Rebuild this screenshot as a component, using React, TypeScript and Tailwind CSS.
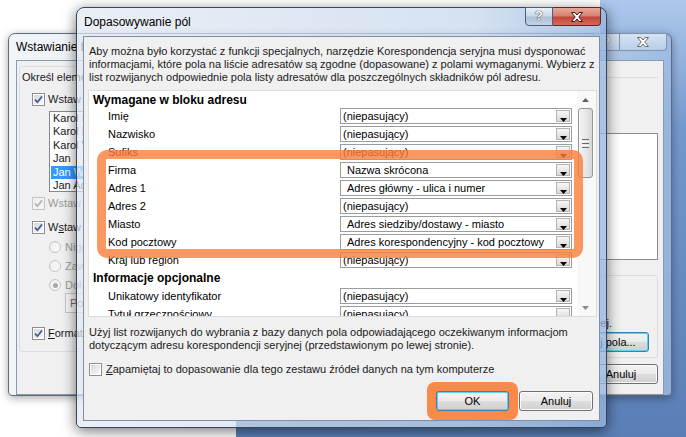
import type { ReactNode } from 'react';

const NONE = '(niepasujący)';

const requiredFields: [string, string][] = [
  ['Imię', NONE],
  ['Nazwisko', NONE],
  ['Sufiks', NONE],
  ['Firma', 'Nazwa skrócona'],
  ['Adres 1', 'Adres główny - ulica i numer'],
  ['Adres 2', NONE],
  ['Miasto', 'Adres siedziby/dostawy - miasto'],
  ['Kod pocztowy', 'Adres korespondencyjny - kod pocztowy'],
  ['Kraj lub region', NONE],
];

const optionalFields: [string, string][] = [
  ['Unikatowy identyfikator', NONE],
  ['Tytuł grzecznościowy', NONE],
];

const recipients = ['Karol Nowak', 'Karol Kowalski', 'Karol Wiśniewski', 'Jan', 'Jan Wójcik', 'Jan Adamski'];

function CheckBox({ checked = false, disabled = false }: { checked?: boolean; disabled?: boolean }) {
  return (
    <span
      className={`flex h-[13px] w-[13px] shrink-0 items-center justify-center border ${
        disabled ? 'border-[#c4c4c4] bg-[#f4f4f4]' : 'border-[#8e8f8f] bg-white'
      }`}
    >
      <span
        className={`flex h-[9px] w-[9px] items-center justify-center bg-gradient-to-br ${
          disabled ? 'from-[#ececec] to-[#f8f8f8]' : 'from-[#d4d8de] to-[#f9f9f9]'
        }`}
      >
        {checked && (
          <svg width="9" height="9" viewBox="0 0 9 9">
            <path
              d="M1 4.6 L3.4 7.2 L8 1.4"
              fill="none"
              stroke={disabled ? '#b3b3b3' : '#4a5f8f'}
              strokeWidth="1.7"
            />
          </svg>
        )}
      </span>
    </span>
  );
}

function Radio({ selected = false }: { selected?: boolean }) {
  return (
    <span className="flex h-[12px] w-[12px] shrink-0 items-center justify-center rounded-full border border-[#c4c4c4] bg-gradient-to-br from-[#ececec] to-[#fbfbfb]">
      {selected && <span className="h-[5px] w-[5px] rounded-full bg-[#a8a8a8]" />}
    </span>
  );
}

function PushButton({
  children,
  width,
  focused = false,
}: {
  children: ReactNode;
  width: string;
  focused?: boolean;
}) {
  return (
    <button
      type="button"
      className={`${width} flex h-[20px] shrink-0 items-center justify-center rounded-[3px] border bg-[linear-gradient(#f3f3f3_0%,#ebebeb_48%,#dddddd_52%,#cfcfcf_100%)] text-[11px] leading-none text-black ${
        focused ? 'border-[#3c7fb1] shadow-[inset_0_0_0_1px_#5ad0f6]' : 'border-[#707070] shadow-[inset_0_0_0_1px_#fbfbfb]'
      }`}
    >
      {children}
    </button>
  );
}

function Combo({ value }: { value: string }) {
  return (
    <div className="flex h-[16px] w-[232px] shrink-0 items-stretch border border-[#9c9c9c] bg-white p-px">
      <span className={`flex-1 overflow-hidden whitespace-nowrap leading-[13px] ${value === NONE ? 'pl-px' : 'pl-[5px]'}`}>
        {value}
      </span>
      <span className="flex w-[14px] justify-center border border-[#b4b4b4] bg-gradient-to-b from-[#f7f7f7] to-[#d9d9d9] pt-[7px]">
        <svg width="7" height="4" viewBox="0 0 7 4">
          <polygon points="0,0 7,0 3.5,4" fill="#000" />
        </svg>
      </span>
    </div>
  );
}

function FieldRow({ label, value }: { label: string; value: string }) {
  return (
    <div className="flex h-[18px] shrink-0 items-center pl-[19px]">
      <span className="w-[232px] whitespace-nowrap">{label}</span>
      <Combo value={value} />
    </div>
  );
}

function CaptionX({ stroke }: { stroke: string }) {
  return (
    <svg width="12" height="10" viewBox="0 0 12 10">
      <path
        d="M0.5 0.5 H3.8 L6 3 L8.2 0.5 H11.5 L7.8 5 L11.5 9.5 H8.2 L6 7 L3.8 9.5 H0.5 L4.2 5 Z"
        fill="#fff"
        stroke={stroke}
        strokeWidth="1"
      />
    </svg>
  );
}

function BackWindow() {
  return (
    <div className="absolute left-[8px] top-[33px] flex h-[363px] w-[664px] flex-col rounded-t-[7px] rounded-b-[4px] border border-[#5f6b7c] bg-[linear-gradient(90deg,rgba(236,240,245,0.75),rgba(214,226,240,0.7)_80%,rgba(160,189,228,0.75))] shadow-[0_2px_8px_rgba(0,0,0,0.35)]">
      <div className="relative flex h-[26px] shrink-0 items-center pl-[7px] text-[12px] text-black">
        Wstawianie bloku adresu
        <div className="absolute right-[4px] top-[-1px] flex">
          <span className="flex h-[18px] w-[27px] items-center justify-center rounded-bl-[4px] border border-[#8193ab] bg-gradient-to-b from-[#e2ebf6]/80 to-[#bfd2ea]/80 text-[12px] font-bold text-white [text-shadow:0_0_1px_#555]">
            ?
          </span>
          <span className="flex h-[18px] w-[47px] items-center justify-center rounded-br-[4px] border border-l-0 border-[#8193ab] bg-gradient-to-b from-[#e2ebf6]/80 to-[#bfd2ea]/80">
            <CaptionX stroke="#6b6b6b" />
          </span>
        </div>
      </div>
      <div className="mx-[7px] flex flex-1 border border-[#8a99ad] bg-[#f0f0f0] text-[11px] text-[#1a1a1a]">
        <div className="ml-[2px] mt-[5px] flex h-[286px] w-[300px] flex-col rounded-[3px] border border-[#d5dfe5] pl-[1px]">
          <div className="mt-[4px] whitespace-nowrap pl-px leading-[13px]">Określ elementy bloku adresu</div>
          <div className="mt-[8px] flex h-[14px] items-center gap-[3px] pl-[11px]">
            <CheckBox checked />
            <span className="whitespace-nowrap">Wstaw nazwę adresata w tym formacie:</span>
          </div>
          <div className="ml-[28px] mt-[5px] h-[81px] w-[200px] border border-[#828790] bg-white">
            {recipients.map((name, index) => (
              <div
                key={name}
                className={`ml-px whitespace-nowrap pl-[2px] leading-[13.4px] ${index === 4 ? 'bg-[#3399ff] text-white' : ''}`}
              >
                {name}
              </div>
            ))}
          </div>
          <div className="mt-[4px] flex h-[14px] items-center gap-[3px] pl-[11px] text-[#9a9a9a]">
            <CheckBox checked disabled />
            <span className="whitespace-nowrap">Wstaw nazwę firmy</span>
          </div>
          <div className="mt-[10px] flex h-[14px] items-center gap-[3px] pl-[11px]">
            <CheckBox checked />
            <span className="whitespace-nowrap">
              W<span className="underline">s</span>taw adres pocztowy:
            </span>
          </div>
          {[
            'Nigdy nie dołączaj kraju/regionu w adresie',
            'Zawsze dołączaj kraj/region w adresie',
            'Dołączaj kraj/region tylko wtedy, gdy jest inny niż:',
          ].map((label, index) => (
            <div
              key={label}
              className={`${index === 0 ? 'mt-[6px]' : 'mt-[5px]'} flex h-[14px] items-center gap-[4px] pl-[28px] text-[#9a9a9a]`}
            >
              <Radio selected={index === 2} />
              <span className="whitespace-nowrap">{label}</span>
            </div>
          ))}
          <div className="ml-[44px] mt-px flex h-[20px] w-[180px] items-center border border-[#c4c4c4] bg-[#f4f4f4] pl-[4px] text-[#6d6d6d]">
            Polska
          </div>
          <div className="mt-[13px] flex h-[14px] items-center gap-[3px] pl-[11px]">
            <CheckBox checked />
            <span className="whitespace-nowrap">
              <span className="underline">F</span>ormatuj adres zgodnie z krajem/regionem docelowym
            </span>
          </div>
        </div>

        <div className="flex flex-1 flex-col items-end pr-[5px]">
          <div className="mt-[4px] h-[13px] w-[300px] border-b border-[#d5dfe5]" />
          <div className="mt-[55px] h-[127px] w-[300px] border border-[#8d8d8d] bg-white" />
          <div className="mt-[15px] flex h-[83px] w-[300px] flex-col items-end rounded-[3px] border border-[#d5dfe5] pr-[8px]">
            <span className="mr-[37px] mt-[41px] whitespace-nowrap leading-[13px]">
              elementy adresu z listy adresowej.
            </span>
            <div className="mt-[2px]">
              <PushButton width="w-[100px]" focused>
                Dopasuj pola...
              </PushButton>
            </div>
          </div>
          <div className="mt-[6px] flex gap-[6px]">
            <PushButton width="w-[74px]">OK</PushButton>
            <PushButton width="w-[74px]">Anuluj</PushButton>
          </div>
        </div>
      </div>
    </div>
  );
}

function MainDialog() {
  return (
    <div className="absolute left-[76px] top-[7px] flex h-[421px] w-[531px] flex-col rounded-t-[8px] rounded-b-[5px] border border-[#34465e] bg-[linear-gradient(90deg,rgba(226,233,242,0.72),rgba(196,213,236,0.7)_75%,rgba(150,181,224,0.78))] shadow-[0_3px_14px_rgba(0,0,0,0.55)]">
      <div className="relative flex h-[28px] shrink-0 items-center pl-[7px] text-[12px] text-black">
        Dopasowywanie pól
        <div className="absolute right-[5px] top-[-1px] flex">
          <span className="flex h-[19px] w-[28px] items-center justify-center rounded-bl-[4px] border border-[#4d5f78] bg-[linear-gradient(#e7eef7_0%,#cbd8e8_48%,#aebfd4_52%,#c3d3e6_100%)] pb-px text-[13px] font-bold text-white [text-shadow:0_0_1px_#222,0_0_1px_#222]">
            ?
          </span>
          <span className="flex h-[19px] w-[48px] items-center justify-center rounded-br-[4px] border border-l-0 border-[#5a2a24] bg-[linear-gradient(#e6a898_0%,#d88272_45%,#c4463a_55%,#d66b5a_100%)]">
            <CaptionX stroke="#3a1a16" />
          </span>
        </div>
      </div>

      <div className="mx-[6px] mb-[6px] flex flex-1 flex-col border border-[#7d8ea6] bg-[#f0f0f0] text-[11px] text-[#1a1a1a]">
        <div className="whitespace-nowrap pl-[5px] pt-[8px] leading-[13px]">
          <div>Aby można było korzystać z funkcji specjalnych, narzędzie Korespondencja seryjna musi dysponować</div>
          <div>informacjami, które pola na liście adresatów są zgodne (dopasowane) z polami wymaganymi. Wybierz z</div>
          <div>list rozwijanych odpowiednie pola listy adresatów dla poszczególnych składników pól adresu.</div>
        </div>

        <div className="relative ml-[4px] mt-[6px] flex h-[227px] w-[509px] shrink-0 border border-[#dcdcdc] bg-white text-black">
          <div className="flex flex-1 flex-col overflow-hidden">
            <div className="flex h-[16px] shrink-0 items-center pl-[4px] pt-[2px] text-[12px] font-bold">
              Wymagane w bloku adresu
            </div>
            {requiredFields.map(([label, value]) => (
              <FieldRow key={label} label={label} value={value} />
            ))}
            <div className="flex h-[18px] shrink-0 items-center pl-[4px] text-[12px] font-bold">Informacje opcjonalne</div>
            {optionalFields.map(([label, value]) => (
              <FieldRow key={label} label={label} value={value} />
            ))}
          </div>

          <div className="flex w-[19px] shrink-0 flex-col bg-[#f8f8f8]">
            <div className="flex h-[17px] items-center justify-center pr-[3px]">
              <svg width="7" height="4" viewBox="0 0 7 4">
                <polygon points="3.5,0 7,4 0,4" fill="#606060" />
              </svg>
            </div>
            <div className="ml-px flex h-[70px] w-[15px] flex-col items-center justify-center gap-[1px] rounded-[3px] border border-[#979797] bg-gradient-to-r from-[#f4f4f4] via-[#e8e8e8] to-[#d6d6d6]">
              <span className="h-px w-[7px] bg-[#6a6a6a]" />
              <span className="h-px w-[7px] bg-[#f8f8f8]" />
              <span className="h-px w-[7px] bg-[#6a6a6a]" />
              <span className="h-px w-[7px] bg-[#f8f8f8]" />
              <span className="h-px w-[7px] bg-[#6a6a6a]" />
            </div>
            <div className="flex-1" />
            <div className="flex h-[17px] items-center justify-center pr-[3px]">
              <svg width="7" height="4" viewBox="0 0 7 4">
                <polygon points="0,0 7,0 3.5,4" fill="#8a8a8a" />
              </svg>
            </div>
          </div>

          <div className="pointer-events-none absolute left-[8px] top-[59px] h-[108px] w-[486px] rounded-[10px] border-[9px] border-[#fa7d38]/80" />
        </div>

        <div className="mt-[9px] whitespace-nowrap pl-[5px] leading-[13px]">
          <div>Użyj list rozwijanych do wybrania z bazy danych pola odpowiadającego oczekiwanym informacjom</div>
          <div>dotyczącym adresu korespondencji seryjnej (przedstawionym po lewej stronie).</div>
        </div>

        <div className="mt-[10px] flex h-[14px] items-center gap-[4px] pl-[5px]">
          <CheckBox />
          <span className="whitespace-nowrap">
            <span className="underline">Z</span>apamiętaj to dopasowanie dla tego zestawu źródeł danych na tym komputerze
          </span>
        </div>

        <div className="mt-auto flex items-end justify-end pr-[6px]">
          <div className="rounded-[8px] bg-[#fa8a4a] p-[9px]">
            <PushButton width="w-[73px]" focused>
              OK
            </PushButton>
          </div>
          <div className="mb-[9px] ml-px">
            <PushButton width="w-[74px]">Anuluj</PushButton>
          </div>
        </div>
      </div>
    </div>
  );
}

export default function App() {
  return (
    <div className="relative h-[437px] w-[686px] overflow-hidden bg-gradient-to-b from-[#adc8ec] via-[#7398cd] via-30% to-[#5a7fb6] font-['Liberation_Sans',Arial,sans-serif]">
      <div className="absolute left-0 top-0 h-[396px] w-[600px] bg-white" />
      <div className="absolute left-0 top-0 h-full w-[236px] bg-white" />
      <BackWindow />
      <MainDialog />
    </div>
  );
}
